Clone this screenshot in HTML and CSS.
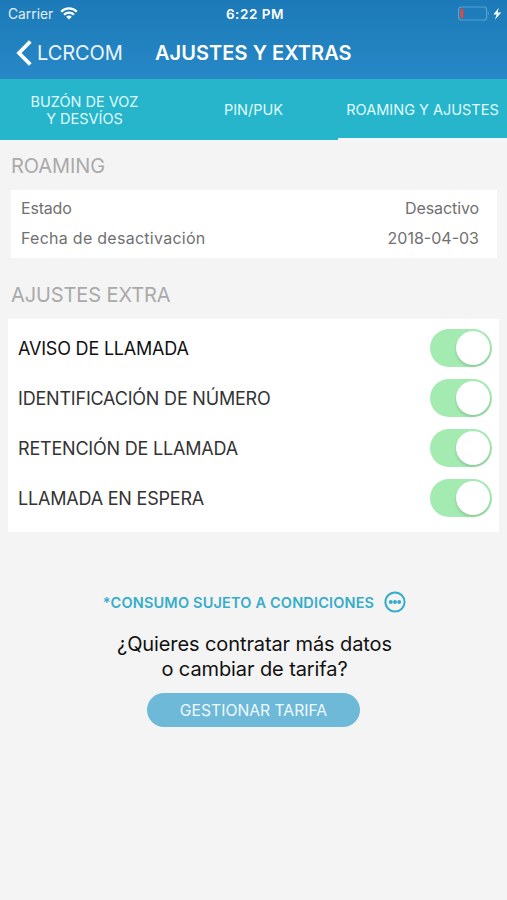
FILE: index.html
```html
<!DOCTYPE html>
<html lang="es">
<head>
    <meta charset="UTF-8">
    <meta name="viewport" content="width=device-width, initial-scale=1.0">
    <title>Ajustes y extras</title>
    <link rel="stylesheet" href="styles.css">
</head>
<body>
    <header class="header">
        <div class="status-bar">
            <div class="carrier">
                <span>Carrier</span>
                <svg class="wifi" width="18" height="13" viewBox="0 0 18 13" fill="none" stroke="#fff" stroke-width="2.3">
                    <path d="M1.2 4.7a11 11 0 0 1 15.6 0"/>
                    <path d="M4 7.7a7 7 0 0 1 10 0"/>
                    <path d="M9 12.6L6.2 9.8a4 4 0 0 1 5.6 0z" fill="#fff" stroke="none"/>
                </svg>
            </div>
            <span class="time">6:22 PM</span>
            <svg class="battery" width="44" height="15" viewBox="0 0 44 15">
                <rect x="0.6" y="1" width="28" height="13" rx="2.5" fill="none" stroke="#5ba1d0" stroke-width="1.2"/>
                <rect x="2.2" y="2.8" width="3.4" height="9.4" rx="1" fill="#c9504f"/>
                <path d="M30 5.5q2 2 0 4z" fill="#5ba1d0"/>
                <path d="M40.8 1.8L35.4 8.4h3.2l-1.7 5.4 6.3-7.2h-3.6z" fill="#fff"/>
            </svg>
        </div>
        <div class="nav-bar">
            <a class="back">
                <svg width="16" height="26" viewBox="0 0 16 26" fill="none" stroke="#fff" stroke-width="3.8">
                    <path d="M14.3 1.5L3 13l11.3 11.5"/>
                </svg>
                <span>LCRCOM</span>
            </a>
            <h1>AJUSTES Y EXTRAS</h1>
        </div>
    </header>

    <nav class="tabs">
        <a class="tab">BUZÓN DE VOZ<br>Y DESVÍOS</a>
        <a class="tab">PIN/PUK</a>
        <a class="tab active">ROAMING Y AJUSTES</a>
    </nav>

    <main>
        <h2>ROAMING</h2>
        <div class="roaming-card">
            <div class="info-row"><span class="estado">Estado</span><span class="valor">Desactivo</span></div>
            <div class="info-row"><span class="fecha">Fecha de desactivación</span><span>2018-04-03</span></div>
        </div>

        <h2 class="extra-title">AJUSTES EXTRA</h2>
        <div class="extra-card">
            <div class="switch-row first"><span>AVISO DE LLAMADA</span><div class="switch"></div></div>
            <div class="switch-row"><span>IDENTIFICACIÓN DE NÚMERO</span><div class="switch"></div></div>
            <div class="switch-row"><span>RETENCIÓN DE LLAMADA</span><div class="switch"></div></div>
            <div class="switch-row"><span>LLAMADA EN ESPERA</span><div class="switch"></div></div>
        </div>

        <div class="conditions">
            <span>*CONSUMO SUJETO A CONDICIONES</span>
            <svg width="22" height="22" viewBox="0 0 22 22">
                <circle cx="11" cy="11" r="9.6" fill="none" stroke="#36adc9" stroke-width="2"/>
                <g fill="#36adc9">
                    <circle cx="6.8" cy="11" r="2"/>
                    <circle cx="11" cy="11" r="2"/>
                    <circle cx="15.2" cy="11" r="2"/>
                </g>
            </svg>
        </div>

        <p class="question">¿Quieres contratar más datos<br>o cambiar de tarifa?</p>
        <button class="manage">GESTIONAR TARIFA</button>
    </main>
</body>
</html>
```
FILE: styles.css
```css
* {
    box-sizing: border-box;
}

body {
    margin: 0;
    min-height: 100vh;
    font-family: Inter, "Liberation Sans", sans-serif;
    background: #f4f4f4;
    color: #222;
}

.header {
    height: 79px;
    background: linear-gradient(#1b7ab7, #2887c6);
    color: white;
}

.status-bar {
    display: grid;
    grid-template-columns: 1fr auto 1fr;
    align-items: center;
    height: 27px;
    padding: 0 5px 0 8px;
    font-size: 13.8px;
}

.carrier {
    display: flex;
    align-items: center;
    gap: 7px;
    color: #e3f0f9;
}

.time {
    font-weight: 600;
    font-size: 13.5px;
    letter-spacing: 0.55px;
}

.battery {
    justify-self: end;
}

.nav-bar {
    display: flex;
    align-items: center;
    height: 51px;
    padding-left: 16px;
}

.back {
    display: flex;
    align-items: center;
    width: 139px;
    gap: 5px;
    font-size: 20px;
    letter-spacing: -0.1px;
    color: #eaf5fc;
}

h1 {
    margin: 0;
    font-size: 20px;
    font-weight: 600;
    letter-spacing: 0.05px;
}

.tabs {
    display: grid;
    grid-template-columns: repeat(3, 1fr);
    height: 61px;
    background: #26b5cb;
}

.tab {
    display: flex;
    align-items: center;
    justify-content: center;
    text-align: center;
    font-size: 14.5px;
    line-height: 17px;
    color: #e0fafc;
    white-space: nowrap;
}

.tab.active {
    padding-top: 2px;
    border-bottom: 2px solid #f2f9fd;
}

h2 {
    margin: 0;
    padding: 14px 11px 0;
    font-size: 20px;
    font-weight: 400;
    line-height: 24px;
    letter-spacing: -0.1px;
    color: #aaa;
}

.roaming-card {
    margin: 12px 10px 0 11px;
    height: 68px;
    padding: 3px 18px 0 10px;
    background: white;
    color: #707070;
    font-size: 16px;
}

.info-row {
    display: flex;
    align-items: center;
    justify-content: space-between;
    height: 30px;
}

.estado {
    letter-spacing: -0.2px;
}

.fecha {
    letter-spacing: 0.27px;
}

.valor {
    letter-spacing: -0.1px;
}

.extra-title {
    padding-top: 25px;
}

.extra-card {
    margin: 12px 8px 0;
    height: 213px;
    padding: 4px 7px 0 10px;
    background: white;
}

.switch-row {
    display: flex;
    align-items: center;
    justify-content: space-between;
    height: 50px;
    font-size: 18px;
    letter-spacing: -0.2px;
    color: #333;
}

.switch-row.first {
    color: #111;
}

.switch {
    display: flex;
    align-items: center;
    justify-content: flex-end;
    width: 62px;
    height: 38px;
    padding-right: 2px;
    border-radius: 19px;
    background: #a3ebb1;
}

.switch::after {
    content: "";
    width: 34px;
    height: 34px;
    border-radius: 50%;
    background: white;
    box-shadow: 0 2px 3px rgba(0, 0, 0, 0.15);
}

.conditions {
    display: flex;
    align-items: center;
    justify-content: center;
    gap: 10px;
    margin-top: 59px;
    padding-left: 2px;
    font-size: 14.5px;
    font-weight: 600;
    letter-spacing: 0.17px;
    color: #36adc9;
}

.question {
    margin: 19px 0 0;
    padding-left: 2px;
    text-align: center;
    font-size: 20px;
    line-height: 24.5px;
    letter-spacing: -0.1px;
    color: #111;
}

.manage {
    display: block;
    width: 213px;
    height: 34px;
    margin: 12px auto 0;
    padding: 0;
    border: none;
    border-radius: 17px;
    background: #6eb8d8;
    color: #eefaff;
    font-family: inherit;
    font-size: 15.7px;
}
```
